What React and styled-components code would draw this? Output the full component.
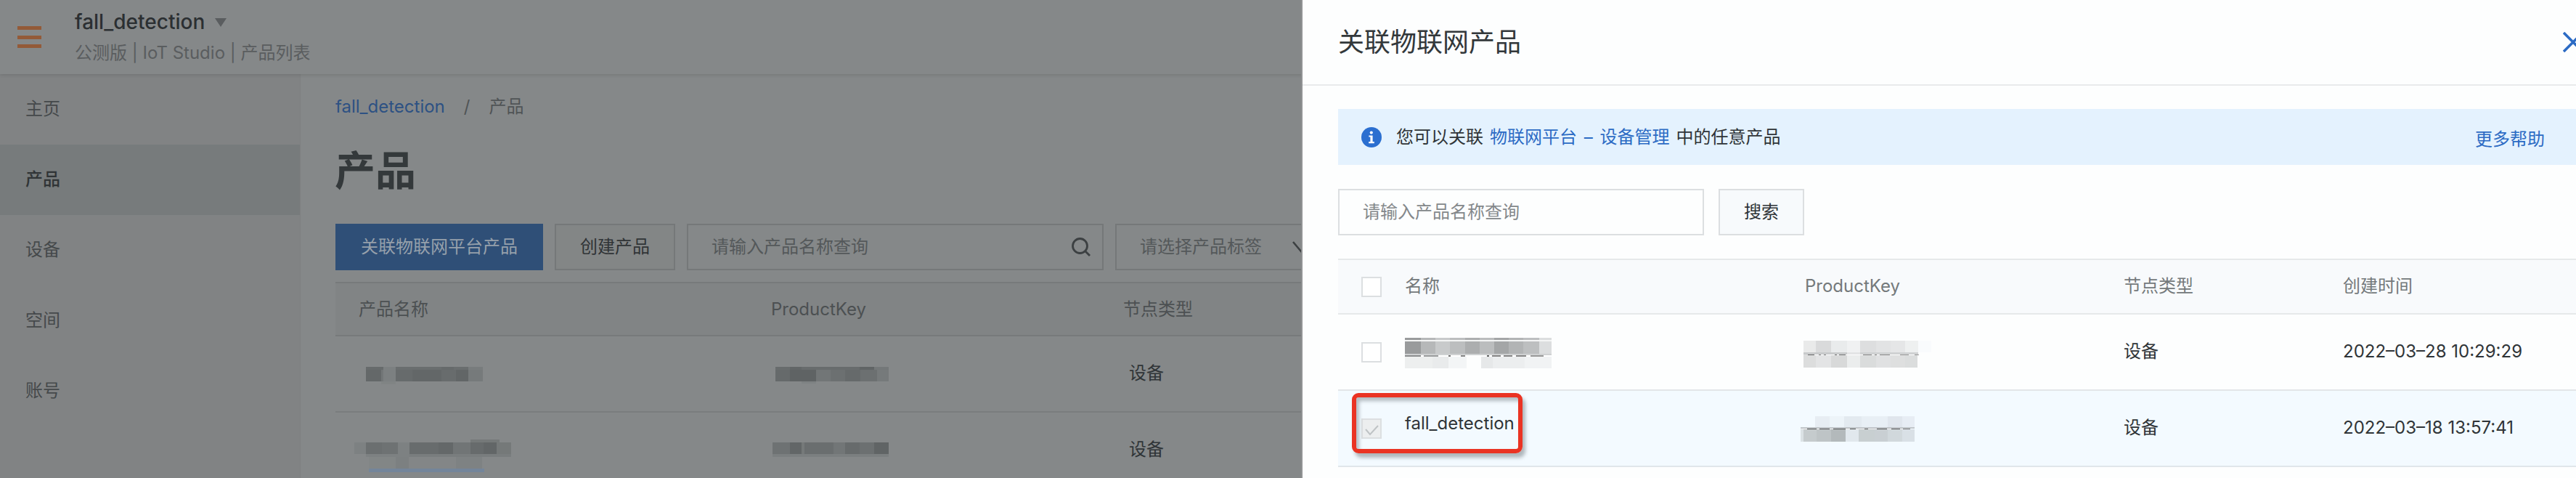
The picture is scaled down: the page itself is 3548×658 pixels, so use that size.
import React from 'react';
import styled, { createGlobalStyle, css } from 'styled-components';

const Global = createGlobalStyle`
  * { box-sizing: border-box; }
  html, body { margin: 0; padding: 0; }
  body {
    font-family: Inter, "Noto Sans CJK SC", sans-serif;
    font-size: 24px;
    line-height: 36px;
    color: #2f3437;
    background: #858889;
  }
`;

const Stage = styled.div`
  position: relative;
  width: 3548px;
  height: 658px;
  overflow: hidden;
  background: #858889;
  white-space: nowrap;
`;

/* ---------- dimmed page ---------- */

const TopBar = styled.header`
  position: relative;
  display: flex;
  height: 102px;
  padding: 10px 0 0 24px;
  box-shadow: 0 1px 5px rgba(0, 0, 0, 0.14);
`;

const Burger = styled.div`
  display: flex;
  flex-direction: column;
  justify-content: space-between;
  width: 33px;
  height: 30px;
  margin-top: 26px;
`;

const BurgerBar = styled.span`
  height: 5px;
  background: #935a38;
`;

const AppInfo = styled.div`
  margin-left: 46px;
`;

const AppName = styled.div`
  display: flex;
  align-items: center;
  gap: 14px;
  font-size: 28px;
  font-weight: 500;
  line-height: 41px;
  color: #2b2f32;
`;

const Caret = styled.span`
  width: 0;
  height: 0;
  border: 8px solid transparent;
  border-top: 12px solid #5a5d5f;
  border-bottom: 0;
`;

const AppMeta = styled.div`
  line-height: 44px;
  color: #5a5d5f;
`;

const Body = styled.div`
  display: flex;
  height: 556px;
`;

const Sidebar = styled.nav`
  width: 414px;
  background: #818384;
  border-right: 1px solid #7e8081;
`;

const NavItem = styled.div`
  height: 97px;
  padding-left: 35px;
  line-height: 96px;
  color: #45494b;
  ${(p) => p.$active && css`
    background: #777b7c;
    color: #303436;
    font-weight: 500;
  `}
`;

const Content = styled.main`
  flex: 1;
  padding: 20px 0 0 48px;
`;

const Crumbs = styled.div`
  display: flex;
  gap: 26px;
  height: 48px;
  line-height: 49px;
  color: #505456;
`;

const CrumbLink = styled.a`
  color: #2d5183;
`;

const PageTitle = styled.h1`
  margin: 29px 0 0 -1px;
  height: 109px;
  font-size: 56px;
  font-weight: 700;
  line-height: 72px;
  color: #34393b;
`;

const Toolbar = styled.div`
  display: flex;
  gap: 16px;
`;

const Button = styled.button`
  height: 64px;
  padding: 0 33px;
  border: 2px solid ${(p) => p.$border};
  background: ${(p) => p.$bg};
  color: ${(p) => p.$color};
  font: inherit;
  line-height: 56px;
`;

const Field = styled.div`
  display: flex;
  align-items: center;
  justify-content: space-between;
  width: ${(p) => p.$width}px;
  height: 64px;
  padding: 0 ${(p) => p.$right || 16}px 0 32px;
  border: 2px solid ${(p) => p.$border};
  color: ${(p) => p.$color};
`;

const Table = styled.section`
  margin-top: ${(p) => p.$top}px;
`;

const Row = styled.div`
  display: grid;
  grid-template-columns: ${(p) => p.$cols};
  height: ${(p) => p.$h}px;
  border-bottom: 2px solid ${(p) => p.$line};
  background: ${(p) => p.$bg || 'transparent'};
`;

const HeadRow = styled(Row)`
  border-top: 2px solid ${(p) => p.$line};
`;

const Cell = styled.div`
  padding-left: ${(p) => p.$indent || 0}px;
  padding-top: ${(p) => p.$drop || 0}px;
  color: ${(p) => p.$color || 'inherit'};
`;

/* ---------- redacted values ---------- */

const Blur = styled.div`
  width: max-content;
`;

const BlurLine = styled.div`
  display: flex;
  height: ${(p) => p.$h}px;
`;

const BlurBlock = styled.span`
  width: ${(p) => p.$w}px;
  background: ${(p) => p.$c};
`;

function Mosaic({ lines }) {
  return (
    <Blur>
      {lines.map(([h, cells], i) => (
        <BlurLine key={i} $h={h}>
          {cells.map(([w, c], j) => <BlurBlock key={j} $w={w} $c={c} />)}
        </BlurLine>
      ))}
    </Blur>
  );
}

const T = 'transparent';
const pageNameA = [
  [4, [[15, T], [24, '#676b6c'], [17, '#7c8081'], [63, '#6a6e6f'], [17, '#666a6b'], [20, '#6a6e6f'], [20, '#787c7d']]],
  [16, [[15, T], [21, '#646869'], [3, '#727677'], [17, '#7c8081'], [23, '#676b6c'], [40, '#636768'], [20, '#686c6d'], [17, '#626667'], [20, '#767a7b']]],
  [4, [[36, T], [20, '#808484']]],
];
const pageKeyA = [
  [4, [[20, '#686c6d'], [16, '#626667'], [80, '#686c6d'], [20, '#606465'], [20, '#747879']]],
  [16, [[20, '#666a6b'], [36, '#5f6364'], [20, '#727677'], [20, '#6c7071'], [21, '#666a6b'], [23, '#6c7071'], [16, '#767a7b']]],
  [3, [[36, T], [20, '#7e8283']]],
];
const pageNameB = [
  [4, [[160, T], [40, '#757979']]],
  [16, [[16, '#7d8182'], [22, '#6b6f70'], [22, '#6e7273'], [16, '#7d8182'], [40, '#686c6d'], [20, '#646869'], [24, '#717576'], [18, '#676b6c'], [18, '#626667'], [20, '#757979']]],
  [4, [[16, T], [60, '#7d8182'], [140, '#797d7e']]],
  [16, [[20, T], [37, '#828686'], [18, '#7c8081'], [65, '#838687'], [36, '#7e8283']]],
  [5, [[20, T], [159, '#74859a']]],
];
const pageKeyB = [
  [16, [[24, '#6e7273'], [16, '#626667'], [4, '#757979'], [40, '#6a6e6f'], [16, '#727677'], [20, '#676b6c'], [20, '#6c7071'], [20, '#606465']]],
  [4, [[160, '#7b7f80']]],
];
const nameCells = [[22, '#999b9c'], [20, '#b6b8b9'], [20, '#c8cacb'], [21, '#bcbebf'], [20, '#acaeaf'], [20, '#bbbdbe'], [20, '#a4a6a7'], [20, '#b2b4b5'], [22, '#bdbfc0'], [17, '#dcdedf']];
const nameLight = [[38, '#edefef'], [22, '#e9ebec'], [25, '#f3f5f6'], [20, T], [16, '#e6e8e9'], [44, '#eceeef'], [37, '#f1f3f4']];
const drawerName = [
  [3, nameCells],
  [2, [[202, '#f4f5f5']]],
  [17, nameCells],
  [2, [[202, '#cfd1d2']]],
  [2, [[22, '#8c8e8f'], [4, '#fff'], [20, '#9c9e9f'], [14, '#fff'], [3, '#777'], [14, '#fff'], [6, '#888'], [30, '#fff'], [3, '#666'], [4, '#fff'], [12, '#888'], [4, '#fff'], [12, '#888'], [5, '#fff'], [14, '#888'], [6, '#fff'], [18, '#999']]],
  [16, nameLight],
];
const drawerKeyA = [
  [16, [[17, '#e9eaea'], [21, '#d9dadb'], [22, '#e9ebec'], [18, '#f0f1f2'], [22, '#dddedf'], [20, '#e2e3e4'], [20, '#e5e6e7'], [18, '#eef0f0'], [18, '#f9fbfd']]],
  [3, [[60, '#c8cacb'], [18, '#e3e4e5'], [80, '#cfd1d2']]],
  [1, [[6, '#ddd'], [9, '#666'], [6, '#fff'], [3, '#888'], [4, '#fff'], [3, '#888'], [12, '#fff'], [3, '#777'], [3, '#fff'], [9, '#777'], [24, '#fff'], [12, '#888'], [4, '#fff'], [3, '#888'], [4, '#fff'], [14, '#888'], [14, '#fff'], [12, '#999'], [8, '#fff'], [6, '#999']]],
  [17, [[17, '#dcdddd'], [21, '#e3e4e5'], [22, '#d8d9d9'], [18, '#ebeded'], [22, '#dadcdc'], [20, '#e0e1e2'], [20, '#dedfdf'], [17, '#dbdddd']]],
];
const drawerKeyB = [
  [15, [[20, T], [20, '#e7edf3'], [20, '#edf4f9'], [24, '#e3eaf0'], [36, '#e8eff5'], [20, '#e0e6ed'], [17, '#e7edf4']]],
  [2, [[157, '#c1c6ca']]],
  [1, [[9, '#eee'], [13, '#555'], [4, '#eee'], [14, '#555'], [5, '#eee'], [17, '#555'], [6, '#eee'], [8, '#555'], [12, '#eee'], [5, '#666'], [12, '#eee'], [14, '#555'], [6, '#eee'], [12, '#555'], [4, '#eee'], [10, '#777']]],
  [17, [[4, '#dbe2e5'], [18, '#c5cbcd'], [20, '#bec4c6'], [20, '#b3b9bb'], [18, '#e1e8ed'], [22, '#c8cfd1'], [18, '#c9cfd3'], [20, '#d1d8dc'], [17, '#d9e0e6']]],
];

/* ---------- drawer ---------- */

const Drawer = styled.aside`
  position: absolute;
  top: 0;
  left: 1794px;
  right: 0;
  bottom: 0;
  background: #fdfefe;
  box-shadow: 0 0 0 2px #919394;
`;

const DrawerHead = styled.div`
  display: flex;
  align-items: center;
  justify-content: space-between;
  height: 118px;
  padding: 0 0 1px 49px;
  border-bottom: 2px solid #e9ebec;
  font-size: 36px;
  color: #33383b;
`;

const CloseIcon = styled.svg`
  flex: none;
  width: 28px;
  height: 28px;
  margin-right: -10px;
  stroke: #2c6bc4;
  stroke-width: 3.6;
`;

const DrawerBody = styled.div`
  padding: 32px 0 0 49px;
`;

const Notice = styled.div`
  display: flex;
  align-items: center;
  height: 77px;
  padding: 0 43px 0 32px;
  background: #e4f2fe;
`;

const InfoIcon = styled.svg`
  width: 28px;
  height: 28px;
  margin-right: 20px;
`;

const NoticeText = styled.div`
  flex: 1;
  display: flex;
  gap: 9px;
  padding-top: 1px;
`;

const Link = styled.a`
  color: #2c6bc4;
  word-spacing: 3px;
`;

const HelpLink = styled(Link)`
  padding-top: 7px;
`;

const SearchBar = styled.div`
  display: flex;
  gap: 20px;
  margin-top: 33px;
`;

const Check = styled.span`
  display: block;
  width: 28px;
  height: 28px;
  border: 2px solid #dcdfe1;
  background: ${(p) => (p.$on ? '#eceeef' : '#fff')};

  svg { display: block; width: 24px; height: 24px; }
`;

const SelectedName = styled.span`
  position: relative;
`;

const Highlight = styled.span`
  position: absolute;
  left: -73px;
  top: -27px;
  width: 235px;
  height: 83px;
  border: 6px solid #ea3323;
  border-radius: 9px;
  box-shadow: 4px 6px 5px rgba(80, 90, 95, 0.42), inset 4px 5px 5px rgba(80, 90, 95, 0.38);
`;

const PAGE_COLS = '600px 485px 1fr';
const DRAWER_COLS = '92px 544px 446px 302px 1fr';
const NAV = ['主页', '产品', '设备', '空间', '账号'];

export default function App() {
  return (
    <Stage>
      <Global />
      <TopBar>
        <Burger><BurgerBar /><BurgerBar /><BurgerBar /></Burger>
        <AppInfo>
          <AppName>fall_detection <Caret /></AppName>
          <AppMeta>公测版 | IoT Studio | 产品列表</AppMeta>
        </AppInfo>
      </TopBar>
      <Body>
        <Sidebar>
          {NAV.map((n) => <NavItem key={n} $active={n === '产品'}>{n}</NavItem>)}
        </Sidebar>
        <Content>
          <Crumbs><CrumbLink>fall_detection</CrumbLink><span>/</span><span>产品</span></Crumbs>
          <PageTitle>产品</PageTitle>
          <Toolbar>
            <Button $bg="#2f4f77" $border="#2f4f77" $color="#96a0ab">关联物联网平台产品</Button>
            <Button $bg="#838686" $border="#757879" $color="#303436">创建产品</Button>
            <Field $width={574} $border="#757879" $color="#54585a">
              请输入产品名称查询
              <svg width="26" height="26" viewBox="0 0 26 26" fill="none" stroke="#3c4042" strokeWidth="2.8">
                <circle cx="11.5" cy="11.5" r="10" />
                <path d="M18.5 18.5 L25 25" />
              </svg>
            </Field>
            <Field $width={290} $right={20} $border="#757879" $color="#54585a">
              请选择产品标签
              <svg width="24" height="16" viewBox="0 0 24 16" fill="none" stroke="#3c4042" strokeWidth="2.6">
                <path d="M1 1 L12 14 L23 1" />
              </svg>
            </Field>
          </Toolbar>
          <Table $top={16}>
            <HeadRow $cols={PAGE_COLS} $h={75} $line="#777a7b" $bg="#818485">
              <Cell $indent={32} $drop={18} $color="#4c5052">产品名称</Cell>
              <Cell $drop={18} $color="#4c5052">ProductKey</Cell>
              <Cell $drop={18} $color="#4c5052">节点类型</Cell>
            </HeadRow>
            <Row $cols={PAGE_COLS} $h={105} $line="#7a7d7e">
              <Cell $indent={27} $drop={42}><Mosaic lines={pageNameA} /></Cell>
              <Cell $indent={6} $drop={42}><Mosaic lines={pageKeyA} /></Cell>
              <Cell $indent={8} $drop={33}>设备</Cell>
            </Row>
            <Row $cols={PAGE_COLS} $h={105} $line="#7a7d7e">
              <Cell $indent={26} $drop={37}><Mosaic lines={pageNameB} /></Cell>
              <Cell $indent={2} $drop={41}><Mosaic lines={pageKeyB} /></Cell>
              <Cell $indent={8} $drop={33}>设备</Cell>
            </Row>
          </Table>
        </Content>
      </Body>

      <Drawer>
        <DrawerHead>
          关联物联网产品
          <CloseIcon viewBox="0 0 28 28"><path d="M1 1 L27 27 M27 1 L1 27" /></CloseIcon>
        </DrawerHead>
        <DrawerBody>
          <Notice>
            <InfoIcon viewBox="0 0 28 28">
              <circle cx="14" cy="14" r="14" fill="#2b6fd0" />
              <circle cx="13.8" cy="7.6" r="2.1" fill="#fff" />
              <path d="M10.4 11.4 H15.6 V20 H17.8 V22.2 H10.2 V20 H12.4 V13.6 H10.4 Z" fill="#fff" />
            </InfoIcon>
            <NoticeText>
              <span>您可以关联</span>
              <Link>物联网平台 – 设备管理</Link>
              <span>中的任意产品</span>
            </NoticeText>
            <HelpLink>更多帮助</HelpLink>
          </Notice>
          <SearchBar>
            <Field $width={504} $border="#dcdfe1" $color="#84888b">请输入产品名称查询</Field>
            <Button $bg="#f7fafc" $border="#dcdfe1" $color="#2f3437">搜索</Button>
          </SearchBar>
          <Table $top={32}>
            <HeadRow $cols={DRAWER_COLS} $h={77} $line="#e6e9ea" $bg="#f8fafc">
              <Cell $indent={32} $drop={23}><Check /></Cell>
              <Cell $drop={18} $color="#74797b">名称</Cell>
              <Cell $indent={7} $drop={18} $color="#74797b">ProductKey</Cell>
              <Cell $drop={18} $color="#74797b">节点类型</Cell>
              <Cell $drop={18} $color="#74797b">创建时间</Cell>
            </HeadRow>
            <Row $cols={DRAWER_COLS} $h={105} $line="#e3e6e8">
              <Cell $indent={32} $drop={38}><Check /></Cell>
              <Cell $drop={32}><Mosaic lines={drawerName} /></Cell>
              <Cell $indent={5} $drop={36}><Mosaic lines={drawerKeyA} /></Cell>
              <Cell $drop={33}>设备</Cell>
              <Cell $drop={33}>2022–03–28 10:29:29</Cell>
            </Row>
            <Row $cols={DRAWER_COLS} $h={105} $line="#e0e6ea" $bg="#f3faff">
              <Cell $indent={32} $drop={38}>
                <Check $on>
                  <svg viewBox="0 0 24 24" fill="none" stroke="#bfc3c5" strokeWidth="2"><path d="M4 13 L10 20 L21 8" /></svg>
                </Check>
              </Cell>
              <Cell $drop={27}>
                <SelectedName>fall_detection<Highlight /></SelectedName>
              </Cell>
              <Cell $indent={1} $drop={35}><Mosaic lines={drawerKeyB} /></Cell>
              <Cell $drop={33}>设备</Cell>
              <Cell $drop={33}>2022–03–18 13:57:41</Cell>
            </Row>
          </Table>
        </DrawerBody>
      </Drawer>
    </Stage>
  );
}
